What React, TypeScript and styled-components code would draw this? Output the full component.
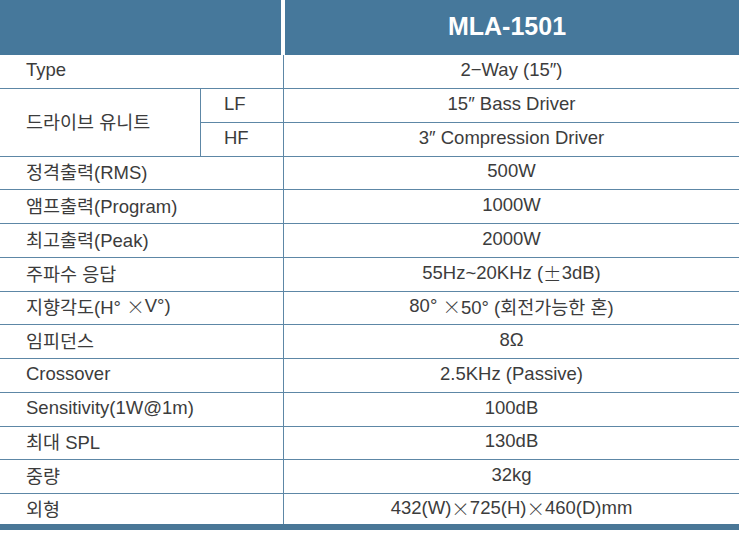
import type { ReactNode } from 'react'
import styled, { createGlobalStyle } from 'styled-components'

const GlobalStyle = createGlobalStyle`
  body {
    margin: 0;
    background: #ffffff;
    font-family: 'Liberation Sans', 'Noto Sans CJK KR', sans-serif;
  }
`

const LINE = '#5d87a6'
const HEAD = '#46789b'

const Page = styled.div`
  width: 739px;
  display: flex;
  flex-direction: column;
`

const HeadRow = styled.div`
  display: flex;
  gap: 4px;
  height: 55px;
`

const HeadCell = styled.div<{ $w?: string }>`
  box-sizing: border-box;
  background: ${HEAD};
  flex: ${p => (p.$w ? `0 0 ${p.$w}` : '1')};
  display: flex;
  align-items: center;
  justify-content: center;
  color: #ffffff;
  font-weight: bold;
  font-size: 25px;
  padding-right: 10px;
  padding-bottom: 2px;
`

const Grid = styled.div`
  display: grid;
  grid-template-columns: 200px 83px 1fr;
  grid-template-rows: 34px repeat(12, 33.75px) 30px;
  color: #3c3c3c;
  font-size: 18.5px;
`

const Cell = styled.div<{ $col: string; $row?: string; $left?: boolean; $center?: boolean; $last?: boolean; $pad?: number }>`
  grid-column: ${p => p.$col};
  grid-row: ${p => p.$row ?? 'auto'};
  display: flex;
  align-items: center;
  justify-content: ${p => (p.$center ? 'center' : 'flex-start')};
  padding-left: ${p => p.$pad ?? 0}px;
  padding-bottom: 3px;
  border-bottom: ${p => (p.$last ? 'none' : `1.5px solid ${LINE}`)};
  border-left: ${p => (p.$left ? `1.5px solid ${LINE}` : 'none')};
  box-sizing: border-box;
  white-space: pre;
`

// wide CJK-style symbols (×, ±) as in the source document
const Sym = styled.span`
  font-family: 'Noto Sans CJK KR', sans-serif;
  font-weight: 300;
`

const BottomBar = styled.div`
  height: 6px;
  background: #4a7797;
`

const rows: [ReactNode, ReactNode][] = [
  ['정격출력(RMS)', '500W'],
  ['앰프출력(Program)', '1000W'],
  ['최고출력(Peak)', '2000W'],
  ['주파수 응답', <>55Hz~20KHz (<Sym>±</Sym>3dB)</>],
  [<>지향각도(H° <Sym>×</Sym>V°)</>, <>80° <Sym>×</Sym>50° (회전가능한 혼)</>],
  ['임피던스', '8Ω'],
  ['Crossover', '2.5KHz (Passive)'],
  ['Sensitivity(1W@1m)', '100dB'],
  ['최대 SPL', '130dB'],
  ['중량', '32kg'],
  ['외형', <>432(W)<Sym>×</Sym>725(H)<Sym>×</Sym>460(D)mm</>],
]

function App() {
  return (
    <>
      <GlobalStyle />
      <Page>
        <HeadRow>
          <HeadCell $w="281px" />
          <HeadCell>MLA-1501</HeadCell>
        </HeadRow>
        <Grid>
          <Cell $col="1 / 3" $pad={26}>Type</Cell>
          <Cell $col="3" $left $center>2−Way (15″)</Cell>

          <Cell $col="1" $row="2 / 4" $pad={26}>드라이브 유니트</Cell>
          <Cell $col="2" $left $pad={23}>LF</Cell>
          <Cell $col="3" $left $center>15″ Bass Driver</Cell>
          <Cell $col="2" $left $pad={23}>HF</Cell>
          <Cell $col="3" $left $center>3″ Compression Driver</Cell>

          {rows.map(([label, value], i) => {
            const last = i === rows.length - 1
            return [
              <Cell key={'l' + i} $col="1 / 3" $pad={26} $last={last}>{label}</Cell>,
              <Cell key={'v' + i} $col="3" $left $center $last={last}>{value}</Cell>,
            ]
          })}
        </Grid>
        <BottomBar />
      </Page>
    </>
  )
}

export default App
